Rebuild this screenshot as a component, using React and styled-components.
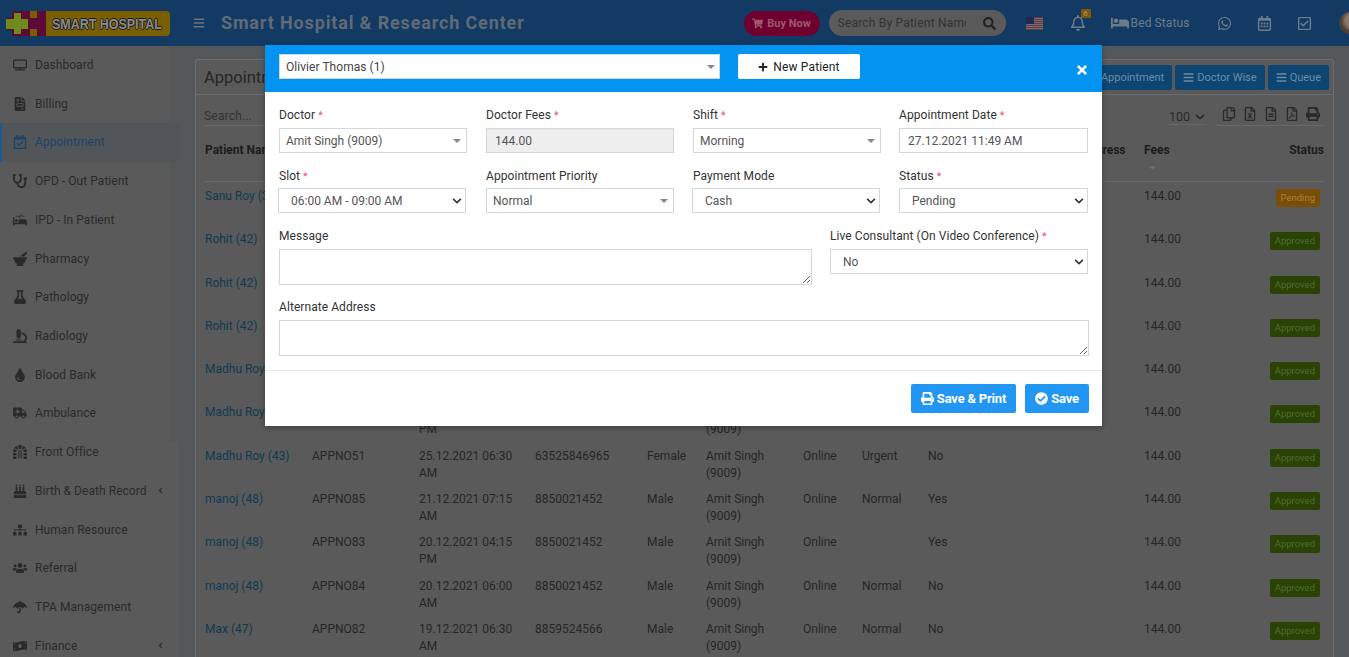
import React from "react";
import styled, { createGlobalStyle } from "styled-components";
import {
  FaTv, FaFileInvoice, FaRegCalendarCheck, FaStethoscope, FaProcedures, FaMortarPestle, FaFlask,
  FaMicroscope, FaTint, FaAmbulance, FaDungeon, FaBirthdayCake, FaSitemap, FaUsers, FaUmbrella,
  FaMoneyBillWave, FaBars, FaShoppingCart, FaSearch, FaRegBell, FaBed, FaWhatsapp, FaRegCalendarAlt,
  FaRegCheckSquare, FaRegCopy, FaRegFileExcel, FaRegFileAlt, FaRegFilePdf, FaPrint, FaPlus, FaTimes,
  FaCheckCircle, FaChevronDown, FaAngleLeft, FaCaretDown,
} from "react-icons/fa";

const Global = createGlobalStyle`
  html, body { margin: 0; padding: 0; background: #5a5a5a; }
  * { box-sizing: border-box; }
  body { font-family: Roboto, "Liberation Sans", sans-serif; font-size: 12px; }
`;

const Page = styled.div`
  position: relative; width: 1349px; height: 657px; overflow: hidden;
  display: flex; flex-direction: column; background: #54585b;
`;

const TopBar = styled.header`
  height: 46px; flex: none; background: #123a63; display: flex; align-items: center; position: relative;
`;
const Logo = styled.div`margin-left: 6px; width: 164px; height: 25px; display: flex; flex: none;`;
const LogoMark = styled.svg`width: 40px; height: 25px; flex: none;`;
const LogoBar = styled.div`
  flex: 1; min-width: 0; background: #7a5f00; border-radius: 0 4px 4px 0; display: flex; align-items: center; padding-left: 6px; overflow: hidden;
`;
const LogoText = styled.span`
  font: bold 15px "Liberation Sans", sans-serif; color: #8a8a8a; white-space: nowrap;
  text-shadow: 1px 0 #1a1a1a, -1px 0 #1a1a1a, 0 1px #1a1a1a, 0 -1px #1a1a1a;
  transform: scaleX(.83); transform-origin: left;
`;
const Burger = styled.span`margin-left: 23px; display: flex; color: #6d7680; font-size: 12px;`;
const Title = styled.div`
  margin: 0 0 2px 16px; font-size: 18px; font-weight: 700; color: #5f6b78; letter-spacing: .85px; white-space: nowrap;
`;
const BuyNow = styled.div`
  margin-left: 219px; width: 76px; height: 25px; flex: none; border-radius: 13px; background: #6e0030; color: #a0566f;
  display: flex; align-items: center; justify-content: center; gap: 4px; font-size: 11px; font-weight: 700;
`;
const SearchPill = styled.div`
  margin-left: 9px; width: 177px; height: 26px; flex: none; border-radius: 13px; background: #5a5a5a; color: #333;
  display: flex; align-items: center; padding: 0 10px 0 9px; font-size: 12px; justify-content: space-between;
`;
const SearchText = styled.span`width: 128px; overflow: hidden; white-space: nowrap; letter-spacing: .2px;`;
const Flag = styled.svg`margin-left: 20px; width: 17px; height: 13px; flex: none;`;
const BellWrap = styled.span`position: relative; margin-left: 27px; display: flex; color: #6d7c8c; font-size: 16px;`;
const BellBadge = styled.span`
  position: absolute; right: -5px; top: -6px; width: 10px; height: 9px; background: #80570c; color: #b99a5c;
  font-size: 8px; line-height: 9px; text-align: center; border-radius: 1px;
`;
const BedStatus = styled.span`
  margin-left: 25px; display: flex; align-items: center; gap: 2px; color: #6d7c8c; font-size: 12px; letter-spacing: .1px; white-space: nowrap;
`;
const HeadIcon = styled.span`display: flex; color: #6d7c8c; font-size: 15px; flex: none; margin-left: ${p => p.$left}px;`;
const Avatar = styled.span`
  margin-left: 27px; width: 22px; height: 22px; flex: none; border-radius: 50%;
  background: radial-gradient(circle at 60% 40%, #8a7768 0 35%, #4a4038 60%);
`;

const Body = styled.div`flex: 1; display: flex; min-height: 0;`;
const Sidebar = styled.nav`position: relative; width: 179px; flex: none; background: #5a5a5a; overflow: hidden;`;
const SideList = styled.div`margin-top: -0.4px;`;
const Thumb = styled.span`
  position: absolute; right: 1px; top: 0; width: 9px; height: 396px; background: #555759; border-radius: 0 0 3px 3px;
`;
const MenuItem = styled.div`
  height: 38.73px; display: flex; align-items: center; padding-left: 13px; font-size: 12px; letter-spacing: .05px;
  color: ${p => (p.$active ? "#1a4466" : "#2a2a2a")};
  background: ${p => (p.$active ? "#535659" : "transparent")};
  box-shadow: ${p => (p.$active ? "inset 2px 0 0 #1f5a8c" : "none")};
  position: relative; white-space: nowrap;
`;
const MenuIcon = styled.span`width: 22px; flex: none; display: flex; font-size: 14px;`;
const MenuArrow = styled.span`margin-left: auto; margin-right: 14px; display: flex; font-size: 9px; color: #333;`;

const Main = styled.main`flex: 1; min-width: 0; padding: 13px 15px 0 16px; display: flex;`;
const Box = styled.section`
  flex: 1; min-width: 0; background: #5a5a5a; border: 1px solid #6a6e70; border-bottom: 0; border-radius: 3px 3px 0 0;
`;
const BoxHead = styled.div`
  height: 35px; display: flex; align-items: center; justify-content: space-between; padding: 0 4px 0 8px;
  border-bottom: 1px solid #6a6e70;
`;
const BoxTitle = styled.h3`margin: 0; font-size: 16.5px; font-weight: 400; color: #262626;`;
const BoxBtns = styled.div`display: flex; gap: 3px;`;
const BoxBtn = styled.span`
  height: 25px; padding: 0 8px; display: flex; align-items: center; gap: 3px; background: #0d4673; color: #6f8ba3;
  border-radius: 2px; font-size: 11px; white-space: nowrap;
`;
const Toolbar = styled.div`
  height: 41px; display: flex; align-items: flex-start; padding: 0 8px 0 8px; justify-content: space-between;
`;
const SearchBox = styled.div`
  width: 200px; height: 31px; padding-top: 14px; color: #333; font-size: 12px; border-bottom: 1px solid #686868; letter-spacing: .2px;
`;
const Tools = styled.div`display: flex; align-items: flex-start;`;
const PageSize = styled.div`
  margin-top: 14px; width: 36px; height: 16px; display: flex; align-items: center; justify-content: space-between; color: #2a2a2a;
  font-size: 12.5px; border-bottom: 1px solid #686868;
`;
const ExportIcons = styled.div`
  margin-left: 11px; width: 109px; height: 31px; border-bottom: 1px solid #686868; display: grid;
  grid-template-columns: repeat(5, 21px); align-items: center; justify-items: start; padding: 8px 0 0 6px; color: #2a2a2a; font-size: 14px;
`;

const cols = "107px 107px 116px 112px 59px 97px 59px 66px 100px 116px 96px 84px";
const HeadRow = styled.div`
  display: grid; grid-template-columns: ${cols}; margin: 0 9px; height: 46px; border-bottom: 1px solid #6a6a6a;
  font-weight: 700; color: #1c1c1c; line-height: 17px; padding-top: 6px;
`;
const HeadCell = styled.div`
  position: relative; white-space: nowrap;
  text-align: ${p => (p.$right ? "right" : "left")};
`;
const SortMark = styled.span`
  position: absolute; left: 3px; top: 20px; display: flex; color: #6f6f6f; font-size: 11px;
`;
const Row = styled.div`
  display: grid; grid-template-columns: ${cols}; margin: 0 9px; height: 43.3px; padding-top: 6px;
  line-height: 17px; color: #262626;
`;
const Cell = styled.div`padding-right: ${p => p.$pad ?? 8}px; white-space: normal; text-align: ${p => (p.$right ? "right" : "left")};`;
const NameLink = styled.span`color: #0f3a52;`;
const Badge = styled.span`
  display: inline-block; margin: 1px 4px 0 0; padding: 0 5px; height: 18px; line-height: 18px; border-radius: 2px; font-size: 9.5px;
  background: ${p => (p.$pending ? "#7a4e06" : "#2a4204")}; color: ${p => (p.$pending ? "#a88040" : "#4f6e30")};
`;

const Modal = styled.div`
  position: absolute; left: 265px; top: 45px; width: 837px; height: 381px; background: #fff; box-shadow: 0 2px 6px rgba(0,0,0,.3);
  display: flex; flex-direction: column; color: #333;
`;
const ModalHead = styled.div`
  height: 47px; flex: none; background: #0394f1; padding: 9px 14px 0; display: flex; align-items: flex-start; position: relative;
`;
const PatientSelect = styled.div`
  width: 441px; height: 25px; background: #fff; border: 1px solid #d5d5d5; display: flex; align-items: center;
  justify-content: space-between; padding: 0 4px 0 6px; color: #444; font-size: 12px; letter-spacing: .05px;
`;
const NewPatient = styled.button`
  margin-left: 18px; width: 122px; height: 25px; border: 0; border-radius: 2px; background: #fff; color: #222;
  font: 12px Roboto, sans-serif; letter-spacing: .15px; display: flex; align-items: center; justify-content: center; gap: 5px;
`;
const Close = styled.span`
  position: absolute; right: 13px; top: 18px; display: flex; color: #fff; font-size: 14px;
`;
const ModalBody = styled.div`padding: 16px 14px 0; display: flex; flex-direction: column; gap: 15px;`;
const FourCols = styled.div`display: grid; grid-template-columns: repeat(4, 188px); column-gap: 19px; row-gap: 15px; width: 809px;`;
const SplitCols = styled.div`display: grid; grid-template-columns: 533px 258px; column-gap: 18px; width: 809px; margin-top: 1px;`;
const Field = styled.div`display: flex; flex-direction: column; min-width: 0; margin-left: ${p => (p.$wide ? -1 : 0)}px;`;
const Label = styled.label`
  height: 15px; line-height: 15px; font-size: 12px; color: #333; letter-spacing: .07px; white-space: nowrap;
  margin-top: ${p => (p.$tight ? 1 : 0)}px; margin-bottom: ${p => (p.$tight ? 4 : 5)}px;
`;
const Req = styled.span`color: #f0485f; margin-left: 3px; font-size: 10.5px;`;
const fieldBox = `
  height: 25px; border: 1px solid #d2d6de; background: #fff; color: #555; font-size: 12px;
  display: flex; align-items: center; width: 100%;
`;
const Select2 = styled.div`${fieldBox} justify-content: space-between; padding: 0 5px 0 6px;`;
const Arrow = styled.span`
  width: 0; height: 0; border-left: 4px solid transparent; border-right: 4px solid transparent; border-top: 4px solid #888;
`;
const NativeSelect = styled.div`
  ${fieldBox} justify-content: space-between; padding: 1px 3px 0 12px; margin-left: ${p => (p.$nudge ? -1 : 0)}px;
`;
const Chevron = styled.span`display: flex; color: #333; font-size: 10px;`;
const PlainValue = styled.div`${fieldBox} padding: 1px 9px 0 8px; background: ${p => (p.$disabled ? "#eee" : "#fff")};`;
const TextArea = styled.textarea`
  display: block; width: ${p => p.$w || "100%"}; height: 36px; border: 1px solid #d2d6de; background: #fff; padding: 4px; resize: vertical; outline: none;
`;
const ModalFoot = styled.div`
  margin-top: auto; height: 56px; border-top: 1px solid #e8e8e8; display: flex; justify-content: flex-end; gap: 9px; padding: 13px 13px 0 0;
`;
const SaveBtn = styled.button`
  height: 29px; padding: 0; width: ${p => p.$w}px; border: 0; border-radius: 2px; background: #2196f3; color: #fff;
  font: 700 13px Roboto, sans-serif; letter-spacing: -.2px; display: flex; align-items: center; justify-content: center; gap: 3px;
`;

const menu = [
  [FaTv, "Dashboard"], [FaFileInvoice, "Billing"], [FaRegCalendarCheck, "Appointment", "active"],
  [FaStethoscope, "OPD - Out Patient"], [FaProcedures, "IPD - In Patient"], [FaMortarPestle, "Pharmacy"],
  [FaFlask, "Pathology"], [FaMicroscope, "Radiology"], [FaTint, "Blood Bank"], [FaAmbulance, "Ambulance"],
  [FaDungeon, "Front Office"], [FaBirthdayCake, "Birth & Death Record", "arrow"], [FaSitemap, "Human Resource"],
  [FaUsers, "Referral"], [FaUmbrella, "TPA Management"], [FaMoneyBillWave, "Finance", "arrow"],
];

const rows = [
  ["Sanu Roy (39)", "APPNO90", "27.12.2021 10:00 AM", "7896541230", "Male", "Online", "Normal", "No", true],
  ["Rohit (42)", "APPNO89", "27.12.2021 09:30 AM", "9809967867", "Male", "Online", "Normal", "No"],
  ["Rohit (42)", "APPNO88", "27.12.2021 09:15 AM", "9809967867", "Male", "Online", "Normal", "No"],
  ["Rohit (42)", "APPNO87", "27.12.2021 09:00 AM", "9809967867", "Male", "Online", "Normal", "No"],
  ["Madhu Roy (43)", "APPNO53", "25.12.2021 07:00 PM", "63525846965", "Female", "Online", "Urgent", "No"],
  ["Madhu Roy (43)", "APPNO52", "25.12.2021 06:45 PM", "63525846965", "Female", "Online", "Urgent", "No"],
  ["Madhu Roy (43)", "APPNO51", "25.12.2021 06:30 AM", "63525846965", "Female", "Online", "Urgent", "No"],
  ["manoj (48)", "APPNO85", "21.12.2021 07:15 AM", "8850021452", "Male", "Online", "Normal", "Yes"],
  ["manoj (48)", "APPNO83", "20.12.2021 04:15 PM", "8850021452", "Male", "Online", "", "Yes"],
  ["manoj (48)", "APPNO84", "20.12.2021 06:00 AM", "8850021452", "Male", "Online", "Normal", "No"],
  ["Max (47)", "APPNO82", "19.12.2021 06:30 AM", "8859524566", "Male", "Online", "Normal", "No"],
];

const heads = ["Patient Name", "Appointment No", "Appointment Date", "Phone", "Gender", "Doctor", "Source", "Priority", "Live Consultant", "Alternate Address", "Fees"];

const USFlag = () => (
  <Flag viewBox="0 0 17 13">
    <rect width="17" height="13" fill="#6b3a46" />
    {[1, 3, 5, 7, 9, 11].map(y => <rect key={y} y={y} width="17" height="1" fill="#6e6e6e" />)}
    <rect width="8" height="7" fill="#1f2a55" />
  </Flag>
);

const LogoArt = () => (
  <LogoMark viewBox="0 0 40 25">
    <rect x="6" width="34" height="25" fill="#5f0a36" />
    <rect x="24" width="7" height="7" fill="#7a5f00" />
    <rect x="24" y="18" width="7" height="7" fill="#7a5f00" />
    <path d="M-1 7h8V1h9v6h7v12h-7v5H7v-5H-1z" fill="#5f0a36" />
    <path d="M0 8h8V2h7v6h7v10h-7v5H8v-5H0z" fill="#6f8a1c" />
  </LogoMark>
);

const Required = () => <Req>*</Req>;

const SelectField = ({ label, value, req, tight }) => (
  <Field>
    <Label $tight={tight}>{label}{req && <Required />}</Label>
    <Select2>{value}<Arrow /></Select2>
  </Field>
);
const ChevronField = ({ label, value, req, tight, wide, nudge }) => (
  <Field $wide={wide}>
    <Label $tight={tight}>{label}{req && <Required />}</Label>
    <NativeSelect $nudge={nudge}>{value}<Chevron><FaChevronDown /></Chevron></NativeSelect>
  </Field>
);
const ValueField = ({ label, value, req, disabled, wide }) => (
  <Field $wide={wide}>
    <Label>{label}{req && <Required />}</Label>
    <PlainValue $disabled={disabled}>{value}</PlainValue>
  </Field>
);

export default function App() {
  return (
    <Page>
      <Global />
      <TopBar>
        <Logo><LogoArt /><LogoBar><LogoText>SMART HOSPITAL</LogoText></LogoBar></Logo>
        <Burger><FaBars /></Burger>
        <Title>Smart Hospital &amp; Research Center</Title>
        <BuyNow><FaShoppingCart />Buy Now</BuyNow>
        <SearchPill><SearchText>Search By Patient Name</SearchText><FaSearch size={13} color="#222" /></SearchPill>
        <USFlag />
        <BellWrap><FaRegBell /><BellBadge>6</BellBadge></BellWrap>
        <BedStatus><FaBed size={18} />Bed Status</BedStatus>
        <HeadIcon $left={27}><FaWhatsapp /></HeadIcon>
        <HeadIcon $left={25}><FaRegCalendarAlt /></HeadIcon>
        <HeadIcon $left={25}><FaRegCheckSquare /></HeadIcon>
        <Avatar />
      </TopBar>
      <Body>
        <Sidebar>
          <Thumb />
          <SideList>
            {menu.map(([Icon, text, kind]) => (
              <MenuItem key={text} $active={kind === "active"}>
                <MenuIcon><Icon /></MenuIcon>
                {text}
                {kind === "arrow" && <MenuArrow><FaAngleLeft /></MenuArrow>}
              </MenuItem>
            ))}
          </SideList>
        </Sidebar>
        <Main>
          <Box>
            <BoxHead>
              <BoxTitle>Appointment Details</BoxTitle>
              <BoxBtns>
                <BoxBtn><FaPlus size={9} />Add Appointment</BoxBtn>
                <BoxBtn><FaBars size={11} />Doctor Wise</BoxBtn>
                <BoxBtn><FaBars size={11} />Queue</BoxBtn>
              </BoxBtns>
            </BoxHead>
            <Toolbar>
              <SearchBox>Search...</SearchBox>
              <Tools>
                <PageSize>100<FaChevronDown size={10} /></PageSize>
                <ExportIcons>
                  <FaRegCopy /><FaRegFileExcel /><FaRegFileAlt /><FaRegFilePdf /><FaPrint />
                </ExportIcons>
              </Tools>
            </Toolbar>
            <HeadRow>
              {heads.map(h => (
                <HeadCell key={h}>{h}{h === "Fees" && <SortMark><FaCaretDown /></SortMark>}</HeadCell>
              ))}
              <HeadCell $right>Status</HeadCell>
            </HeadRow>
            {rows.map(r => (
              <Row key={r[1]}>
                <Cell><NameLink>{r[0]}</NameLink></Cell>
                <Cell>{r[1]}</Cell>
                <Cell>{r[2]}</Cell>
                <Cell>{r[3]}</Cell>
                <Cell $pad={0}>{r[4]}</Cell>
                <Cell>Amit Singh (9009)</Cell>
                <Cell>{r[5]}</Cell>
                <Cell>{r[6]}</Cell>
                <Cell>{r[7]}</Cell>
                <Cell />
                <Cell>144.00</Cell>
                <Cell $right $pad={0}><Badge $pending={r[8]}>{r[8] ? "Pending" : "Approved"}</Badge></Cell>
              </Row>
            ))}
          </Box>
        </Main>
      </Body>

      <Modal>
        <ModalHead>
          <PatientSelect>Olivier Thomas (1)<Arrow /></PatientSelect>
          <NewPatient><FaPlus size={10} />New Patient</NewPatient>
          <Close><FaTimes /></Close>
        </ModalHead>
        <ModalBody>
          <FourCols>
            <SelectField label="Doctor" value="Amit Singh (9009)" req />
            <ValueField label="Doctor Fees" value="144.00" req disabled />
            <SelectField label="Shift" value="Morning" req />
            <ValueField label="Appointment Date" value="27.12.2021 11:49 AM" req wide />
            <ChevronField label="Slot" value="06:00 AM - 09:00 AM" req tight nudge />
            <SelectField label="Appointment Priority" value="Normal" tight />
            <ChevronField label="Payment Mode" value="Cash" tight nudge />
            <ChevronField label="Status" value="Pending" req tight wide />
          </FourCols>
          <SplitCols>
            <Field>
              <Label>Message</Label>
              <TextArea />
            </Field>
            <ChevronField label="Live Consultant (On Video Conference)" value="No" req />
          </SplitCols>
          <Field>
            <Label>Alternate Address</Label>
            <TextArea $w="810px" />
          </Field>
        </ModalBody>
        <ModalFoot>
          <SaveBtn $w={105}><FaPrint />Save &amp; Print</SaveBtn>
          <SaveBtn $w={64}><FaCheckCircle />Save</SaveBtn>
        </ModalFoot>
      </Modal>
    </Page>
  );
}
